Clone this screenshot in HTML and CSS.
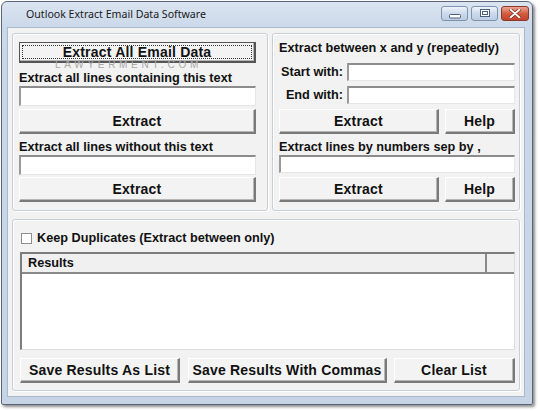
FILE: index.html
```html
<!DOCTYPE html>
<html>
<head>
<meta charset="utf-8">
<link rel="stylesheet" href="styles.css">
</head>
<body>
<div class="window">
  <div class="titlebar">
    <span class="title">Outlook Extract Email Data Software</span>
    <div class="caption-btns">
      <span class="cbtn cmin"><svg width="12" height="6" viewBox="0 0 12 6"><rect x="0.5" y="1.5" width="11" height="3.5" rx="1" fill="#fff" stroke="#4a5f7a"/></svg></span>
      <span class="cbtn cmax"><svg width="10" height="8" viewBox="0 0 10 8"><rect x="0.5" y="0.5" width="9" height="7" fill="#fff" stroke="#4a5f7a"/><rect x="2.5" y="2.5" width="5" height="3" fill="none" stroke="#4a5f7a"/></svg></span>
      <span class="cbtn cclose"><svg width="12" height="9" viewBox="0 0 12 9"><path d="M1.5 0.5 L10.5 8.5 M10.5 0.5 L1.5 8.5" stroke="#7a2a1c" stroke-width="3.2" stroke-linecap="round"/><path d="M1.5 0.5 L10.5 8.5 M10.5 0.5 L1.5 8.5" stroke="#fff" stroke-width="1.8" stroke-linecap="round"/></svg></span>
    </div>
  </div>
  <div class="client">
    <div class="top-row">
      <div class="group gleft">
        <button class="btn btn-default h21"><span class="focus">Extract All Email Data</span></button>
        <div class="watermark">LAWYERMENT.COM</div>
        <div class="label m8">Extract all lines containing this text</div>
        <div class="input h20"></div>
        <button class="btn h25 m3">Extract</button>
        <div class="label m6">Extract all lines without this text</div>
        <div class="input h20"></div>
        <button class="btn h25 m2">Extract</button>
      </div>
      <div class="group gright">
        <div class="label">Extract between x and y (repeatedly)</div>
        <div class="field-row m7">
          <span class="flabel">Start with:</span>
          <div class="input h18 grow"></div>
        </div>
        <div class="field-row m5">
          <span class="flabel">End with:</span>
          <div class="input h18 grow"></div>
        </div>
        <div class="btn-row m5">
          <button class="btn h25 w160">Extract</button>
          <button class="btn h25 grow">Help</button>
        </div>
        <div class="label m6">Extract lines by numbers sep by ,</div>
        <div class="input h18"></div>
        <div class="btn-row m4">
          <button class="btn h25 w160">Extract</button>
          <button class="btn h25 grow">Help</button>
        </div>
      </div>
    </div>
    <div class="group gbottom">
      <div class="check-row">
        <span class="checkbox"></span>
        <span class="label">Keep Duplicates (Extract between only)</span>
      </div>
      <div class="listview">
        <div class="lv-header">
          <div class="lv-col lv-main">Results</div>
          <div class="lv-col lv-rest"></div>
        </div>
      </div>
      <div class="btn-row bottom-btns">
        <button class="btn h25 bw1">Save Results As List</button>
        <button class="btn h25 bw2">Save Results With Commas</button>
        <button class="btn h25 grow">Clear List</button>
      </div>
    </div>
  </div>
</div>
</body>
</html>
```
FILE: styles.css
```css
html, body {
  margin: 0;
  padding: 0;
  background: #ffffff;
  width: 540px;
  height: 411px;
  overflow: hidden;
}
.window {
  margin: 1px 0 0 1px;
  width: 532px;
  height: 404px;
  box-sizing: border-box;
  border: 1px solid #5b6778;
  border-radius: 6px 6px 2px 2px;
  background: linear-gradient(180deg, #dbe5f1 0px, #cad8e9 26px, #c6d4e6 100%);
  box-shadow: 2px 2px 3px rgba(0,0,0,0.45);
  display: flex;
  flex-direction: column;
}
.titlebar {
  height: 26px;
  display: flex;
  align-items: center;
  justify-content: space-between;
  padding: 0 3px 0 24px;
}
.title {
  font-family: "Noto Sans", "Open Sans", sans-serif;
  font-size: 10.6px;
  color: #1a1a1a;
  margin-top: -1px;
}
.caption-btns {
  display: flex;
  gap: 3px;
  margin-top: -3px;
}
.cbtn {
  height: 13px;
  width: 25px;
  border: 1px solid #7f93ad;
  border-radius: 3px;
  background: linear-gradient(180deg, #eef3fa, #c9d7ea 55%, #bccde3);
  display: flex;
  align-items: center;
  justify-content: center;
}
.cmin svg { margin-top: 5px; }
.cclose {
  width: 26px;
  border-color: #8a3a2a;
  background: linear-gradient(180deg, #eaa591, #d2583c 55%, #c24428);
}
.client {
  margin: 1px 8px 8px 6px;
  flex: 1;
  background: #f2f2f2;
  padding: 5px 4px;
  display: flex;
  flex-direction: column;
  font-family: "Liberation Sans", Arial, sans-serif;
  font-weight: bold;
  color: #111;
  box-shadow: 0 0 0 1px #a9b8ca;
}
.top-row {
  display: flex;
  gap: 4px;
  height: 178px;
}
.group {
  box-sizing: border-box;
  border: 1px solid #c7cfd6;
  border-radius: 3px;
  box-shadow: inset 1px 1px 0 #ffffff, 1px 1px 0 #ffffff;
  display: flex;
  flex-direction: column;
  position: relative;
}
.gleft {
  width: 256px;
  padding: 8px 11px 0 6px;
}
.gright {
  flex: 1;
  padding: 7px 4px 0 6px;
}
.gbottom {
  margin-top: 8px;
  height: 172px;
  padding: 11px 4px 0 7px;
}
.label {
  font-size: 12.7px;
  line-height: 15px;
  height: 15px;
  white-space: nowrap;
}
.m2 { margin-top: 2px; }
.m3 { margin-top: 3px; }
.m4 { margin-top: 4px; }
.m5 { margin-top: 5px; }
.m6 { margin-top: 6px; }
.m7 { margin-top: 7px; }
.m8 { margin-top: 8px; }
.h18 { height: 18px; }
.h20 { height: 20px; }
.h21 { height: 21px; }
.h25 { height: 25px; }
.w160 { width: 160px; }
.grow { flex: 1; }
.input {
  box-sizing: border-box;
  background: #ffffff;
  border-style: solid;
  border-width: 2px 1px 1px 2px;
  border-color: #8c8c8c #e6e6e6 #e6e6e6 #9a9a9a;
}
.btn {
  box-sizing: border-box;
  margin-left: 0;
  margin-right: 0;
  padding: 0;
  font-family: "Liberation Sans", Arial, sans-serif;
  font-weight: bold;
  font-size: 14px;
  color: #111;
  background: #f3f3f3;
  border-style: solid;
  border-width: 1px 2px 2px 1px;
  border-color: #ffffff #7a7a7a #7a7a7a #ffffff;
  box-shadow: inset -1px -1px 0 #b5b5b5;
  display: flex;
  align-items: center;
  justify-content: center;
  white-space: nowrap;
  letter-spacing: 0.2px;
}
.btn-default {
  border-color: #555 #555 #555 #555;
  border-width: 1px 2px 2px 1px;
  padding: 2px;
}
.focus {
  flex: 1;
  align-self: stretch;
  display: flex;
  align-items: center;
  justify-content: center;
  border: 1px dotted #333;
  line-height: 14px;
}
.watermark {
  position: absolute;
  left: 42px;
  top: 26px;
  font-family: "Liberation Sans", Arial, sans-serif;
  font-weight: normal;
  font-size: 10px;
  line-height: 10px;
  letter-spacing: 3.7px;
  color: #a9a9a9;
  pointer-events: none;
}
.field-row {
  display: flex;
  align-items: center;
  gap: 4px;
}
.flabel {
  width: 64px;
  text-align: right;
  font-size: 12.7px;
  line-height: 15px;
  white-space: nowrap;
}
.btn-row {
  display: flex;
  gap: 6px;
}
.check-row {
  display: flex;
  align-items: center;
  height: 15px;
  gap: 5px;
}
.checkbox {
  width: 11px;
  height: 11px;
  box-sizing: border-box;
  border: 1px solid #8e8f8f;
  background: #fff;
  margin-left: 1px;
}
.listview {
  margin-top: 6px;
  height: 98px;
  box-sizing: border-box;
  background: #ffffff;
  border-style: solid;
  border-width: 2px 1px 1px 2px;
  border-color: #7d7d7d #dcdcdc #dcdcdc #7d7d7d;
}
.lv-header {
  display: flex;
  height: 18px;
  background: #f0f0f0;
  border-bottom: 2px solid #8a8a8a;
  box-sizing: content-box;
}
.lv-col {
  font-size: 12.7px;
  line-height: 18px;
  padding-left: 6px;
  box-sizing: border-box;
}
.lv-main {
  width: 465px;
  border-right: 2px solid #8a8a8a;
}
.lv-rest {
  flex: 1;
}
.bottom-btns {
  margin-top: 8px;
  gap: 0;
}
.bw1 { width: 160px; margin-right: 8px; }
.bw2 { width: 199px; margin-right: 7px; }
```
